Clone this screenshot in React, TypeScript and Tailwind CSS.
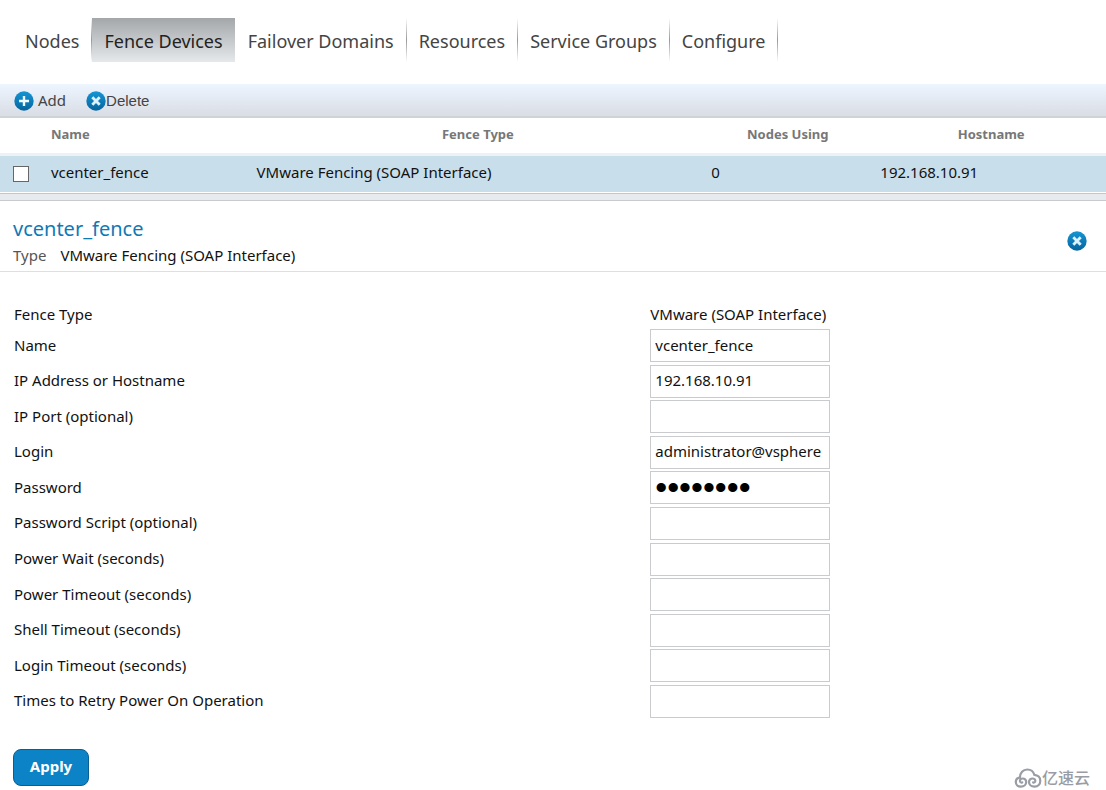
import { useState } from "react";

const tabs = [
  { label: "Nodes", active: false },
  { label: "Fence Devices", active: true },
  { label: "Failover Domains", active: false },
  { label: "Resources", active: false },
  { label: "Service Groups", active: false },
  { label: "Configure", active: false },
];

const fields = [
  { id: "name", label: "Name", value: "vcenter_fence", type: "text" },
  { id: "ip", label: "IP Address or Hostname", value: "192.168.10.91", type: "text" },
  { id: "port", label: "IP Port (optional)", value: "", type: "text" },
  { id: "login", label: "Login", value: "administrator@vsphere", type: "text" },
  { id: "password", label: "Password", value: "password", type: "password" },
  { id: "script", label: "Password Script (optional)", value: "", type: "text" },
  { id: "power-wait", label: "Power Wait (seconds)", value: "", type: "text" },
  { id: "power-timeout", label: "Power Timeout (seconds)", value: "", type: "text" },
  { id: "shell-timeout", label: "Shell Timeout (seconds)", value: "", type: "text" },
  { id: "login-timeout", label: "Login Timeout (seconds)", value: "", type: "text" },
  { id: "retry", label: "Times to Retry Power On Operation", value: "", type: "text" },
];

function RoundIcon({ kind }: { kind: "plus" | "cross" }) {
  return (
    <svg viewBox="0 0 20 20" className="size-5 shrink-0" aria-hidden="true">
      <defs>
        <linearGradient id={`disc-${kind}`} x1="0" y1="0" x2="0" y2="1">
          <stop offset="0" stopColor="#1596d4" />
          <stop offset="1" stopColor="#07639c" />
        </linearGradient>
      </defs>
      <circle cx="10" cy="10" r="9.7" fill={`url(#disc-${kind})`} />
      {kind === "plus" ? (
        <path d="M10 5v10M5 10h10" stroke="#eefaff" strokeWidth="2.4" />
      ) : (
        <path d="M6.3 6.3l7.4 7.4M13.7 6.3l-7.4 7.4" stroke="#dcf3ff" strokeWidth="2.8" />
      )}
    </svg>
  );
}

function CloudLogo() {
  return (
    <svg viewBox="0 0 27 20" className="h-5 w-7" fill="none" stroke="#9a9da6" strokeWidth="2.2" strokeLinecap="round" aria-hidden="true">
      <path d="M5.5 9.3C5.5 4.8 8.5 1.5 12.7 1.5C16.5 1.5 19 3.8 19.8 6.8C23.5 7 25.8 9.5 25.8 12.8C25.8 16.3 23.5 18.7 20 18.7C16.5 18.7 14.5 16.5 14.5 14C14.5 11.8 16.3 10.3 18.3 10.5C20.3 10.7 21.3 12.3 20.6 13.8C20.2 14.6 19.2 14.8 18.6 14.3" />
      <path d="M5.5 9.3C3 9.7 1.3 11.6 1.3 14C1.3 16.7 3.5 18.7 6.3 18.7C9.7 18.7 11.7 16.5 11.7 14C11.7 11.8 10 10.3 8 10.5C6 10.7 5 12.3 5.7 13.8C6.1 14.6 7.1 14.8 7.7 14.3" />
    </svg>
  );
}

export default function App() {
  const [values, setValues] = useState<Record<string, string>>(
    Object.fromEntries(fields.map((f) => [f.id, f.value])),
  );

  return (
    <div className="bg-white font-['Noto_Sans','Noto_Sans_CJK_SC',sans-serif] text-[15px] leading-5 text-[#111]">
      <nav className="flex pt-[18px] pb-[22px] pl-[13px]">
        {tabs.map((tab) => (
          <div key={tab.label} className="flex">
            <a
              href="#"
              className={
                tab.active
                  ? "flex h-11 items-center bg-linear-to-b from-[#a3a7aa] to-[#e6e9ec] px-3 pt-px text-[18px] text-[#222]"
                  : "flex h-11 items-center px-3 pt-px text-[18px] text-[#444]"
              }
            >
              {tab.label}
            </a>
            <span
              className={
                tab.active ? "w-px" : "h-11 w-px bg-linear-to-b from-white via-[#999] to-white"
              }
            />
          </div>
        ))}
      </nav>

      <div className="flex h-[34px] items-center bg-linear-to-b from-[#edf5fe] to-[#d8dce4] pl-[14px] text-[#444] shadow-[inset_0_-2px_0_#cfd3d6]">
        <button type="button" className="flex items-center gap-1">
          <RoundIcon kind="plus" />
          <span className="pb-0.5">Add</span>
        </button>
        <button type="button" className="ml-5 flex items-center font-['Liberation_Sans',sans-serif]">
          <RoundIcon kind="cross" />
          Delete
        </button>
      </div>

      <table className="w-full table-fixed border-collapse text-left">
        <colgroup>
          <col className="w-[4.6%]" />
          <col className="w-[18.6%]" />
          <col className="w-[41.1%]" />
          <col className="w-[15.3%]" />
          <col />
        </colgroup>
        <thead>
          <tr className="h-9 border-b-3 border-[#edf2f8] text-[13px] text-[#777]">
            <th aria-label="Select" />
            <th className="pb-0.5 font-bold">Name</th>
            <th className="pr-3 pb-0.5 text-center font-bold">Fence Type</th>
            <th className="pr-4 pb-0.5 text-center font-bold">Nodes Using</th>
            <th className="pr-1 pb-0.5 text-center font-bold">Hostname</th>
          </tr>
        </thead>
        <tbody>
          <tr className="h-[38px] bg-[#c9deeb]">
            <td className="pl-[13px]">
              <input
                type="checkbox"
                aria-label="Select vcenter_fence"
                className="block size-4 appearance-none border border-[#666] bg-white checked:bg-[#0b80c3]"
              />
            </td>
            <td className="pb-1">vcenter_fence</td>
            <td className="pb-1">VMware Fencing (SOAP Interface)</td>
            <td className="pb-1">0</td>
            <td className="pb-1">192.168.10.91</td>
          </tr>
        </tbody>
      </table>
      <div className="mt-px h-2 border-y border-t-[#b9cad4] border-b-[#c8cbce] bg-[#e8ebed]" />

      <header className="flex items-center justify-between border-b border-[#dedfe1] pt-4 pr-[19px] pb-1.5 pl-[13px]">
        <div>
          <h1 className="text-[20px] leading-6 text-[#0f79b5]">vcenter_fence</h1>
          <dl className="mt-1 flex gap-3.5">
            <dt className="text-[#555]">Type</dt>
            <dd>VMware Fencing (SOAP Interface)</dd>
          </dl>
        </div>
        <button type="button" aria-label="Close">
          <RoundIcon kind="cross" />
        </button>
      </header>

      <form className="pt-8" onSubmit={(e) => e.preventDefault()}>
        <div className="flex">
          <span className="w-[58.8%] pl-[14px]">Fence Type</span>
          <span>VMware (SOAP Interface)</span>
        </div>
        <div className="mt-[5px] flex min-h-[389px] flex-col justify-between">
          {fields.map((field) => (
            <div key={field.id} className="flex items-center">
              <label htmlFor={field.id} className="w-[58.8%] pb-0.5 pl-[14px]">
                {field.label}
              </label>
              <input
                id={field.id}
                type={field.type}
                value={values[field.id]}
                onChange={(e) => setValues({ ...values, [field.id]: e.target.value })}
                className={
                  field.type === "password"
                    ? "h-[33px] w-[180px] border border-[#c9cbce] bg-white px-1 font-['Liberation_Sans',sans-serif] text-[34px] text-black"
                    : "h-[33px] w-[180px] border border-[#c9cbce] bg-white px-1 pb-0.5"
                }
              />
            </div>
          ))}
        </div>
        <div className="flex items-end justify-between pt-[31px] pr-4 pl-[13px]">
          <button
            type="submit"
            className="mb-1 h-[37px] w-[76px] rounded-lg border border-[#0a5f92] bg-[#0b83c6] pb-1 text-[15px] font-bold text-white"
          >
            Apply
          </button>
          <div className="flex items-center pb-0.5 text-[16px] font-medium text-[#999ca5]">
            <CloudLogo />
            亿速云
          </div>
        </div>
      </form>
    </div>
  );
}
